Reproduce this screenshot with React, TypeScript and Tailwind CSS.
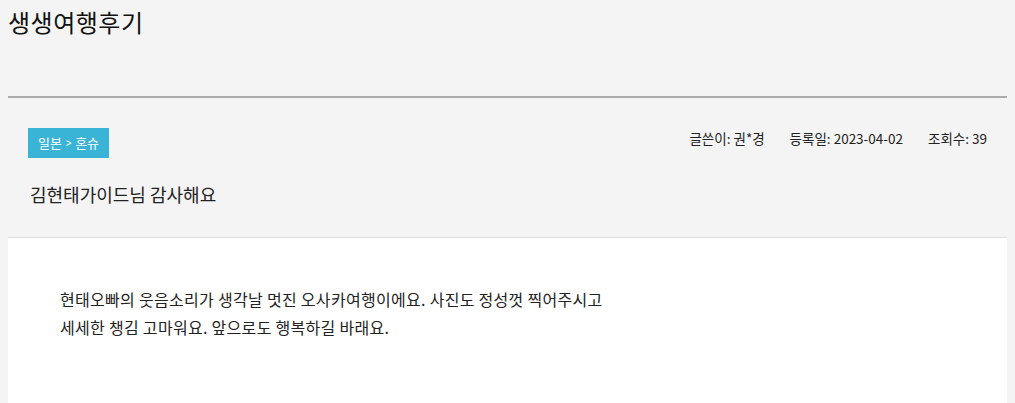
export default function App() {
  return (
    <div className="min-h-[403px] bg-[#f4f4f4] px-2 font-['Noto_Sans_CJK_KR','Noto_Sans',sans-serif] text-[#222]">
      <div className="h-[98px] border-b-2 border-[#aaa]">
        <h2 className="pt-[6px] text-[24px] leading-[32px] font-normal tracking-[0.5px] text-[#111]">생생여행후기</h2>
      </div>

      <div className="border-b border-[#dddddd] px-5 pt-[30px] pb-[30px]">
        <div className="flex items-start justify-between">
          <span className="flex h-[30px] items-center bg-[#3ab4d6] px-[10px] text-[13px] leading-[30px] text-white">
            일본<span className="mx-[3px] scale-x-75">&gt;</span>혼슈
          </span>
          <div className="flex gap-[25px] pt-[1px] text-[13.5px] leading-[18px] text-[#222]">
            <span>글쓴이: 권*경</span>
            <span>등록일: 2023-04-02</span>
            <span>조회수: 39</span>
          </div>
        </div>
        <p className="mt-[23px] pl-[2px] text-[18px] leading-[26px] text-[#222]">김현태가이드님 감사해요</p>
      </div>

      <div className="h-[166px] bg-white px-[52px] pt-[47px] text-[16px] leading-[28px] tracking-[0.3px] text-[#222]">
        현태오빠의 웃음소리가 생각날 멋진 오사카여행이에요. 사진도 정성껏 찍어주시고
        <br />
        세세한 챙김 고마워요. 앞으로도 행복하길 바래요.
      </div>
    </div>
  );
}
